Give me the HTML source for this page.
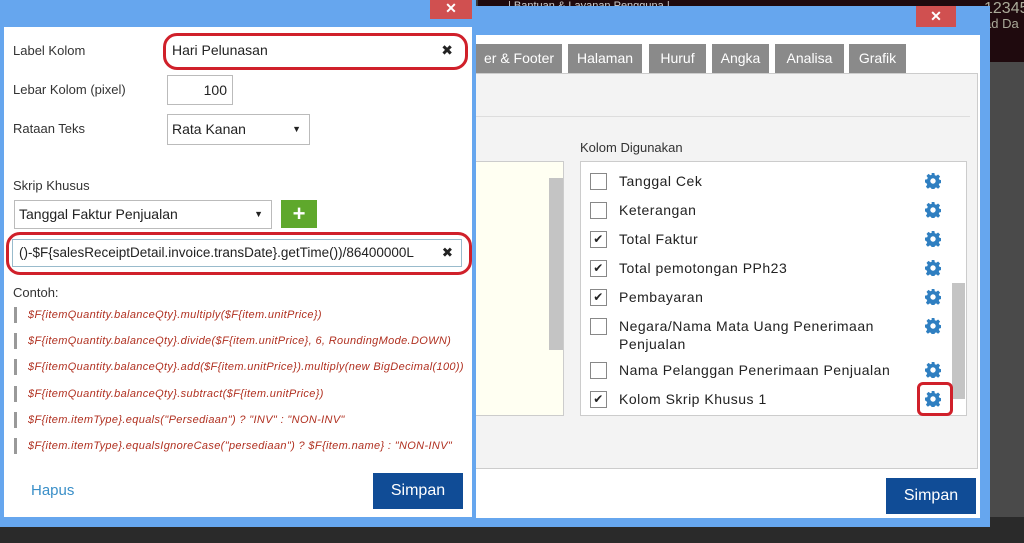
<!DOCTYPE html>
<html><head><meta charset="utf-8"><style>
*{box-sizing:border-box;margin:0;padding:0}
body{width:1024px;height:543px;overflow:hidden;background:#3b3b3b;font-family:"Liberation Sans",sans-serif;position:relative}
.a{position:absolute}
.tab{position:absolute;top:44px;height:29px;background:#8a8a8a;color:#fff;font-size:14px;line-height:29px;text-align:center}
.row{position:absolute;left:590px;font-size:14px;color:#222;letter-spacing:.5px}
.cb{position:absolute;left:0;top:0;width:17px;height:17px;border:1px solid #888;background:#fff;font-size:12px;line-height:15px;text-align:center}
.gear{position:absolute;left:335px;top:0}
.ex{position:absolute;left:14px;font-size:11px;font-style:italic;color:#b03020;border-left:3px solid #999;padding-left:11px;height:16px;line-height:16px;white-space:nowrap;letter-spacing:.35px}
.inp{position:absolute;border:1px solid #bbb;background:#fff;font-size:14px;color:#222}
</style></head><body>
<svg width="0" height="0" style="position:absolute"><defs><symbol id="g" viewBox="0 0 16 16"><path fill="#2f7fc1" fill-rule="evenodd" d="M6.6 0h2.8l.4 2.2 1.4.6 1.9-1.3 2 2-1.3 1.9.6 1.4 2.2.4v2.8l-2.2.4-.6 1.4 1.3 1.9-2 2-1.9-1.3-1.4.6-.4 2.2H6.6l-.4-2.2-1.4-.6-1.9 1.3-2-2 1.3-1.9-.6-1.4L0 9.4V6.6l2.2-.4.6-1.4-1.3-1.9 2-2 1.9 1.3 1.4-.6zM8 5.3a2.7 2.7 0 1 0 0 5.4 2.7 2.7 0 1 0 0-5.4z"/></symbol></defs></svg>
<div class="a" style="left:478px;top:0;width:546px;height:62px;background:#1f0a0e"></div>
<div class="a" style="left:508px;top:0;font-size:11px;color:#ccc">| Bantuan &amp; Layanan Pengguna |</div>
<div class="a" style="left:984px;top:0;font-size:16px;color:#aa9">12345</div>
<div class="a" style="left:984px;top:16px;font-size:13px;color:#aa9">ad Da</div>
<div class="a" style="left:990px;top:62px;width:34px;height:455px;background:#4a4a4a"></div>
<div class="a" style="left:0;top:517px;width:1024px;height:26px;background:#2a2a2a"></div>
<!-- back dialog -->
<div class="a" style="left:150px;top:6px;width:840px;height:521px;background:#66a6ee"></div>
<div class="a" style="left:916px;top:6px;width:40px;height:21px;background:#d05050;color:#fff;text-align:center;font-size:14px;font-weight:bold;line-height:21px">✕</div>
<div class="a" style="left:476px;top:35px;width:504px;height:483px;background:#fff"></div>
<div class="tab" style="left:476px;width:86px">er &amp; Footer</div>
<div class="tab" style="left:568px;width:74px">Halaman</div>
<div class="tab" style="left:649px;width:57px">Huruf</div>
<div class="tab" style="left:712px;width:57px">Angka</div>
<div class="tab" style="left:775px;width:69px">Analisa</div>
<div class="tab" style="left:849px;width:57px">Grafik</div>
<div class="a" style="left:476px;top:73px;width:502px;height:396px;background:#f3f3f3;border:1px solid #ccc;border-left:none"></div>
<div class="a" style="left:476px;top:116px;width:494px;height:1px;background:#ddd"></div>
<div class="a" style="left:580px;top:140px;font-size:13px;color:#333">Kolom Digunakan</div>
<div class="a" style="left:476px;top:161px;width:88px;height:255px;background:#fffff2;border:1px solid #ccc;border-left:none"></div>
<div class="a" style="left:549px;top:178px;width:14px;height:172px;background:#c4c4c4"></div>
<div class="a" style="left:580px;top:161px;width:387px;height:255px;background:#fff;border:1px solid #ccc"></div>
<div class="a" style="left:952px;top:283px;width:13px;height:116px;background:#c4c4c4"></div>
<div class="row" style="top:173px"><div class="cb"></div><span style="position:absolute;left:29px;top:0;white-space:nowrap">Tanggal Cek</span><svg class="gear" width="16" height="16"><use href="#g"/></svg></div>
<div class="row" style="top:202px"><div class="cb"></div><span style="position:absolute;left:29px;white-space:nowrap">Keterangan</span><svg class="gear" width="16" height="16"><use href="#g"/></svg></div>
<div class="row" style="top:231px"><div class="cb">✔</div><span style="position:absolute;left:29px;white-space:nowrap">Total Faktur</span><svg class="gear" width="16" height="16"><use href="#g"/></svg></div>
<div class="row" style="top:260px"><div class="cb">✔</div><span style="position:absolute;left:29px;white-space:nowrap">Total pemotongan PPh23</span><svg class="gear" width="16" height="16"><use href="#g"/></svg></div>
<div class="row" style="top:289px"><div class="cb">✔</div><span style="position:absolute;left:29px;white-space:nowrap">Pembayaran</span><svg class="gear" width="16" height="16"><use href="#g"/></svg></div>
<div class="row" style="top:318px"><div class="cb"></div><span style="position:absolute;left:29px;white-space:nowrap;line-height:18px;top:-1px">Negara/Nama Mata Uang Penerimaan<br>Penjualan</span><svg class="gear" width="16" height="16"><use href="#g"/></svg></div>
<div class="row" style="top:362px"><div class="cb"></div><span style="position:absolute;left:29px;white-space:nowrap">Nama Pelanggan Penerimaan Penjualan</span><svg class="gear" width="16" height="16"><use href="#g"/></svg></div>
<div class="row" style="top:391px"><div class="cb">✔</div><span style="position:absolute;left:29px;white-space:nowrap">Kolom Skrip Khusus 1</span><svg class="gear" width="16" height="16"><use href="#g"/></svg></div>
<div class="a" style="left:917px;top:382px;width:36px;height:34px;border:3px solid #d0202a;border-radius:6px"></div>
<div class="a" style="left:886px;top:478px;width:90px;height:36px;background:#104c96;color:#fff;font-size:16px;text-align:center;line-height:36px">Simpan</div>
<!-- front dialog -->
<div class="a" style="left:0;top:0;width:476px;height:527px;background:#66a6ee"></div>
<div class="a" style="left:430px;top:0;width:42px;height:19px;background:#d05050;color:#fff;text-align:center;font-size:14px;font-weight:bold;line-height:17px">✕</div>
<div class="a" style="left:4px;top:27px;width:468px;height:490px;background:#fff"></div>
<div class="a" style="left:13px;top:43px;font-size:13px;color:#333">Label Kolom</div>
<div class="a" style="left:13px;top:82px;font-size:13px;color:#333">Lebar Kolom (pixel)</div>
<div class="a" style="left:13px;top:121px;font-size:13px;color:#333">Rataan Teks</div>
<div class="a" style="left:13px;top:178px;font-size:13px;color:#333">Skrip Khusus</div>
<div class="inp" style="left:167px;top:37px;width:296px;height:29px;line-height:27px;padding-left:5px;border:none">Hari Pelunasan<span style="position:absolute;right:10px">✖</span></div>
<div class="a" style="left:163px;top:33px;width:305px;height:37px;border:3px solid #d0202a;border-radius:14px"></div>
<div class="inp" style="left:167px;top:75px;width:66px;height:30px;line-height:28px;text-align:right;padding-right:5px">100</div>
<div class="inp" style="left:167px;top:114px;width:143px;height:31px;line-height:29px;padding-left:4px">Rata Kanan<span style="position:absolute;right:8px;font-size:9px">▼</span></div>
<div class="inp" style="left:14px;top:200px;width:258px;height:29px;line-height:27px;padding-left:4px">Tanggal Faktur Penjualan<span style="position:absolute;right:8px;font-size:9px">▼</span></div>
<div class="a" style="left:281px;top:200px;width:36px;height:28px;background:#5fa82c;color:#fff;font-size:22px;font-weight:bold;text-align:center;line-height:28px">+</div>
<div class="inp" style="left:12px;top:239px;width:450px;height:28px;line-height:26px;padding-left:6px;border-color:#9bc;font-size:13.5px;white-space:nowrap;overflow:hidden">()-$F{salesReceiptDetail.invoice.transDate}.getTime())/86400000L<span style="position:absolute;right:8px;background:#fff">✖</span></div>
<div class="a" style="left:6px;top:232px;width:466px;height:43px;border:3px solid #d0202a;border-radius:14px"></div>
<div class="a" style="left:13px;top:285px;font-size:13px;color:#333">Contoh:</div>
<div class="ex" style="top:307px">$F{itemQuantity.balanceQty}.multiply($F{item.unitPrice})</div>
<div class="ex" style="top:333px">$F{itemQuantity.balanceQty}.divide($F{item.unitPrice}, 6, RoundingMode.DOWN)</div>
<div class="ex" style="top:359px">$F{itemQuantity.balanceQty}.add($F{item.unitPrice}).multiply(new BigDecimal(100))</div>
<div class="ex" style="top:386px">$F{itemQuantity.balanceQty}.subtract($F{item.unitPrice})</div>
<div class="ex" style="top:412px">$F{item.itemType}.equals("Persediaan") ? "INV" : "NON-INV"</div>
<div class="ex" style="top:438px">$F{item.itemType}.equalsIgnoreCase("persediaan") ? $F{item.name} : "NON-INV"</div>
<div class="a" style="left:31px;top:482px;font-size:15px;color:#3a8fc8">Hapus</div>
<div class="a" style="left:373px;top:473px;width:90px;height:36px;background:#104c96;color:#fff;font-size:16px;text-align:center;line-height:36px">Simpan</div>
</body></html>
